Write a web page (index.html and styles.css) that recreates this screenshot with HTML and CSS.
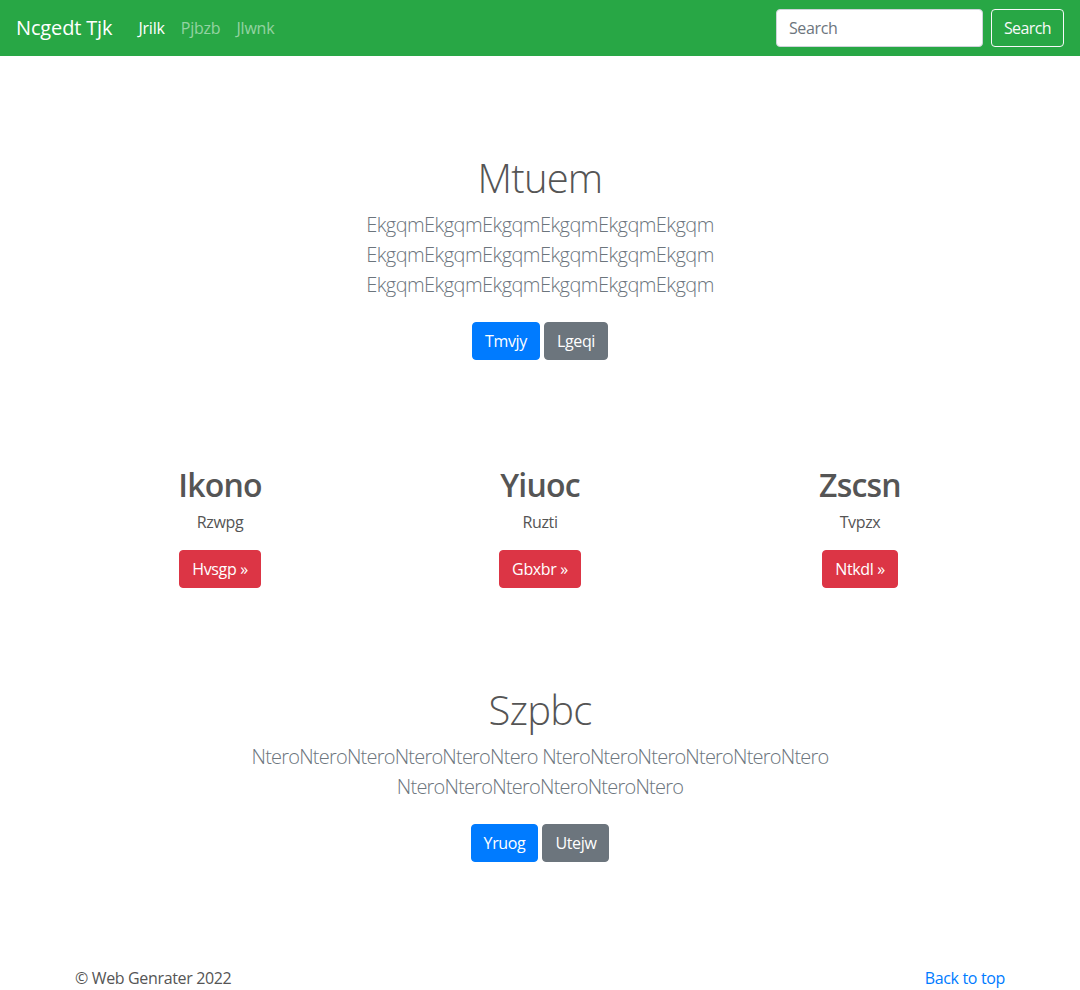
FILE: index.html
```html
<!DOCTYPE html>
<html>
<head>
<meta charset="utf-8">
<link rel="stylesheet" href="styles.css">
</head>
<body>
<nav class="navbar">
  <a class="brand" href="#">Ncgedt Tjk</a>
  <ul class="nav-links">
    <li><a class="nav-link active" href="#">Jrilk</a></li>
    <li><a class="nav-link" href="#">Pjbzb</a></li>
    <li><a class="nav-link" href="#">Jlwnk</a></li>
  </ul>
  <form class="search">
    <input class="search-input" type="text" placeholder="Search">
    <button class="btn btn-outline-light" type="button">Search</button>
  </form>
</nav>

<main>
  <section class="hero">
    <div class="hero-inner narrow">
      <h1 class="hero-title">Mtuem</h1>
      <p class="lead">EkgqmEkgqmEkgqmEkgqmEkgqmEkgqm EkgqmEkgqmEkgqmEkgqmEkgqmEkgqm EkgqmEkgqmEkgqmEkgqmEkgqmEkgqm</p>
      <p class="actions">
        <a class="btn btn-primary" href="#">Tmvjy</a>
        <a class="btn btn-secondary" href="#">Lgeqi</a>
      </p>
    </div>
  </section>

  <section class="features">
    <div class="container cols">
      <div class="col">
        <h2 class="col-title">Ikono</h2>
        <p class="col-text">Rzwpg</p>
        <p class="col-action"><a class="btn btn-danger" href="#">Hvsgp »</a></p>
      </div>
      <div class="col">
        <h2 class="col-title">Yiuoc</h2>
        <p class="col-text">Ruzti</p>
        <p class="col-action"><a class="btn btn-danger" href="#">Gbxbr »</a></p>
      </div>
      <div class="col">
        <h2 class="col-title">Zscsn</h2>
        <p class="col-text">Tvpzx</p>
        <p class="col-action"><a class="btn btn-danger" href="#">Ntkdl »</a></p>
      </div>
    </div>
  </section>

  <section class="hero hero-second">
    <div class="hero-inner wide">
      <h1 class="hero-title">Szpbc</h1>
      <p class="lead lead-tight">NteroNteroNteroNteroNteroNtero NteroNteroNteroNteroNteroNtero NteroNteroNteroNteroNteroNtero</p>
      <p class="actions">
        <a class="btn btn-primary" href="#">Yruog</a>
        <a class="btn btn-secondary" href="#">Utejw</a>
      </p>
    </div>
  </section>
</main>

<footer class="footer">
  <div class="container footer-inner">
    <p class="copy">© Web Genrater 2022</p>
    <a class="back" href="#">Back to top</a>
  </div>
</footer>
</body>
</html>
```

FILE: styles.css
```css
* { box-sizing: border-box; }

html, body {
  margin: 0;
  padding: 0;
}

body {
  font-family: "Open Sans", "Noto Sans", "Liberation Sans", sans-serif;
  font-size: 16px;
  line-height: 1.5;
  letter-spacing: -0.35px;
  color: #555;
  background: #fff;
}

a { text-decoration: none; }

/* Navbar */
.navbar {
  height: 56px;
  background: #28a745;
  display: flex;
  align-items: center;
  padding: 0 16px;
}

.brand {
  color: #fff;
  font-size: 20px;
  line-height: 30px;
  letter-spacing: -0.15px;
  margin-right: 18px;
  white-space: nowrap;
}

.nav-links {
  list-style: none;
  display: flex;
  margin: 0;
  padding: 0;
  flex: 1;
}

.nav-link {
  display: block;
  padding: 8px 8px;
  letter-spacing: -0.2px;
  color: rgba(255, 255, 255, 0.5);
  font-size: 16px;
}

.nav-link.active { color: #fff; }

.search {
  display: flex;
  align-items: center;
}

.search-input {
  width: 207px;
  height: 38px;
  padding: 6px 12px;
  font-family: inherit;
  letter-spacing: inherit;
  font-size: 16px;
  color: #495057;
  background: #fff;
  border: 1px solid #ced4da;
  border-radius: 4px;
  margin-right: 8px;
}

.search-input::placeholder { color: #6c757d; }

/* Buttons */
.btn {
  display: inline-block;
  font-family: inherit;
  letter-spacing: inherit;
  font-size: 16px;
  line-height: 24px;
  padding: 6px 12px;
  border: 1px solid transparent;
  border-radius: 4px;
  color: #fff;
  cursor: pointer;
  vertical-align: middle;
}

.btn-outline-light {
  background: transparent;
  border-color: #f8f9fa;
  color: #f8f9fa;
  letter-spacing: -0.6px;
}

.btn-primary { background: #007bff; border-color: #007bff; }
.btn-secondary { background: #6c757d; border-color: #6c757d; }
.btn-danger { background: #dc3545; border-color: #dc3545; }

/* Hero sections */
.hero {
  padding-top: 98px;
  text-align: center;
}

.hero-inner {
  margin: 0 auto;
}

.narrow { width: 450px; }
.wide { width: 640px; }

.hero-title {
  font-size: 40px;
  font-weight: 300;
  line-height: 48px;
  letter-spacing: -0.8px;
  margin: 0 0 8px;
  color: #555;
}

.lead {
  font-size: 20px;
  font-weight: 300;
  line-height: 30px;
  letter-spacing: -0.55px;
  color: #6c757d;
  margin: 0 0 22px;
}

.lead-tight { letter-spacing: -0.78px; }

.actions {
  margin: 0;
  display: flex;
  justify-content: center;
  gap: 4px;
}

/* Features */
.container {
  width: 960px;
  margin: 0 auto;
}

.features { padding-top: 106px; }

.cols {
  display: grid;
  grid-template-columns: repeat(3, 1fr);
  text-align: center;
}

.col-title {
  font-size: 32px;
  font-weight: 600;
  line-height: 38px;
  letter-spacing: -0.8px;
  margin: 0 0 6px;
  color: #555;
}

.col-text {
  margin: 0 0 16px;
  font-size: 16px;
  line-height: 24px;
}

.col-action { margin: 0; }

.hero-second { padding-top: 98px; }

/* Footer */
.footer {
  padding-top: 104px;
  padding-bottom: 0;
}

.footer-inner {
  display: flex;
  justify-content: space-between;
  padding: 0 15px;
}

.copy {
  margin: 0;
  color: #555;
}

.back { color: #007bff; }
```
